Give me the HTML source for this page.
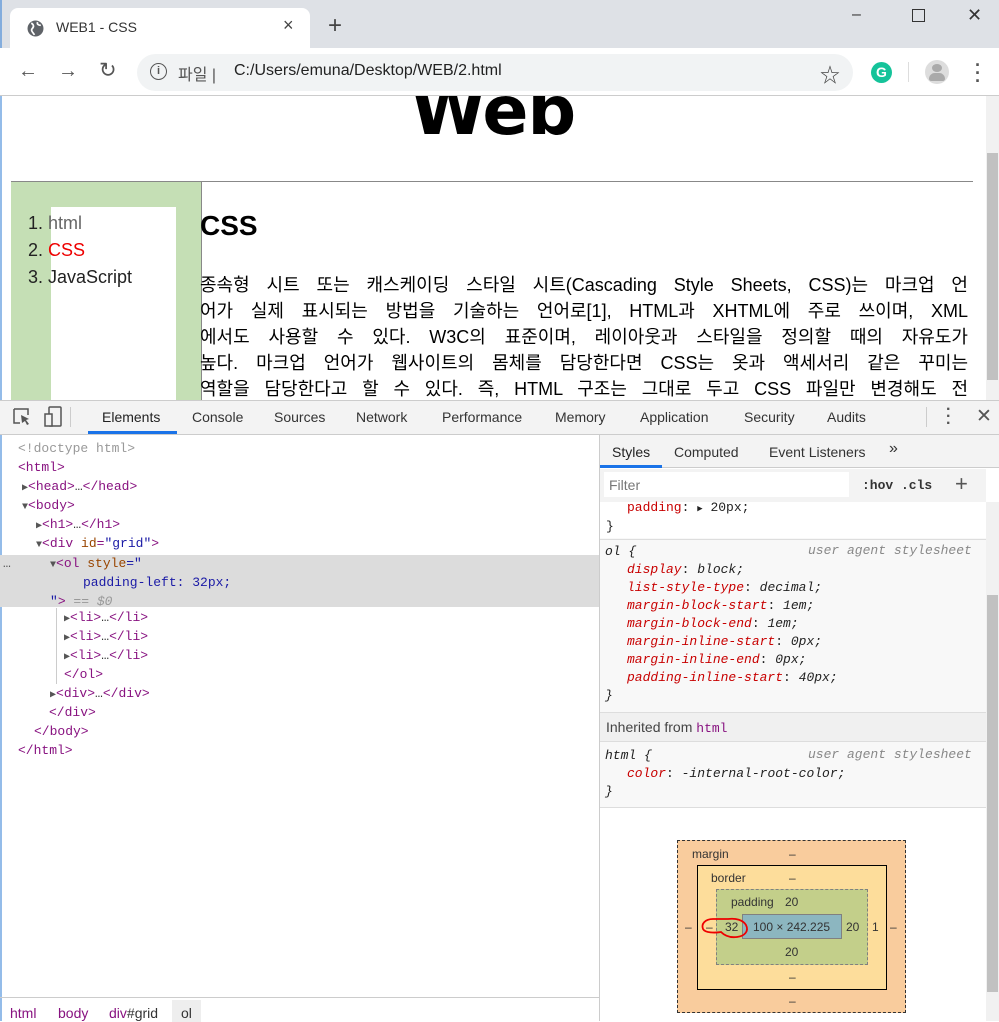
<!DOCTYPE html>
<html><head><meta charset="utf-8"><style>
*{box-sizing:border-box;margin:0;padding:0}
body{width:999px;height:1021px;overflow:hidden;position:relative;font-family:"Liberation Sans","Noto Sans CJK KR",sans-serif;background:#fff}
.a{position:absolute;white-space:nowrap}
.m{font-family:"Liberation Mono","DejaVu Sans Mono",monospace;font-size:13px}
.tg{color:#881280}.at{color:#994500}.av{color:#1a1aa6}.gr{color:#999}
.pr{color:#c80000;font-style:italic}.it{font-style:italic}
.tree div{height:19.1px;line-height:19.1px}
.tri{color:#555;font-size:10px}
.pl div{height:26px;line-height:26px;text-align:justify;text-align-last:justify;width:768px;white-space:normal}
</style></head><body>
<!-- tab strip -->
<div class="a" style="left:0;top:0;width:999px;height:48px;background:#dee1e6"></div>
<div class="a" style="left:0;top:0;width:2px;height:1021px;background:#2a7ad4;opacity:.5"></div>
<div class="a" style="left:10px;top:8px;width:300px;height:42px;background:#fff;border-radius:8px 8px 0 0"></div>
<svg class="a" style="left:27px;top:20px" width="17" height="17" viewBox="0 0 16 16"><circle cx="8" cy="8" r="7.5" fill="#5f6368"/><path d="M4 3c2 1 3 3 1 5s1 4 2 6M10 2c-1 2 1 3 3 3" stroke="#fff" stroke-width="1.6" fill="none"/></svg>
<div class="a" style="left:56px;top:19px;font-size:14px;color:#333">WEB1 - CSS</div>
<div class="a" style="left:283px;top:15px;font-size:18px;color:#444">×</div>
<div class="a" style="left:328px;top:12px;font-size:24px;color:#444">+</div>
<div class="a" style="left:852px;top:6px;font-size:16px;color:#333">–</div>
<div class="a" style="left:912px;top:9px;width:13px;height:13px;border:1.5px solid #333"></div>
<div class="a" style="left:967px;top:5px;font-size:18px;color:#333">✕</div>
<!-- toolbar -->
<div class="a" style="left:0;top:48px;width:999px;height:48px;background:#fff;border-bottom:1px solid #ccc"></div>
<div class="a" style="left:18px;top:60px;font-size:20px;color:#555">←</div>
<div class="a" style="left:58px;top:60px;font-size:20px;color:#555">→</div>
<div class="a" style="left:99px;top:58px;font-size:21px;color:#555">↻</div>
<div class="a" style="left:137px;top:54px;width:716px;height:37px;background:#f1f3f4;border-radius:19px"></div>
<div class="a" style="left:150px;top:63px;width:17px;height:17px;border:1.8px solid #555;border-radius:50%;font-size:11px;text-align:center;line-height:14px;color:#555;font-weight:bold">i</div>
<div class="a" style="left:178px;top:61px;font-size:16px;color:#555">파일 |</div>
<div class="a" style="left:234px;top:62px;font-size:16px;color:#222">C:/Users/emuna/Desktop/WEB/2.html</div>
<div class="a" style="left:820px;top:59px;font-size:20px;color:#444">☆</div>
<div class="a" style="left:871px;top:62px;width:21px;height:21px;border-radius:50%;background:#15c39a;color:#fff;font-size:14px;font-weight:bold;text-align:center;line-height:21px">G</div>
<div class="a" style="left:908px;top:62px;width:1px;height:20px;background:#ddd"></div>
<div class="a" style="left:925px;top:60px;width:24px;height:24px;border-radius:50%;background:#ddd"></div>
<div class="a" style="left:932px;top:64px;width:10px;height:8px;border-radius:50%;background:#aaa"></div>
<div class="a" style="left:929px;top:73px;width:16px;height:8px;border-radius:8px 8px 3px 3px;background:#aaa"></div>
<div class="a" style="left:975px;top:61px;font-size:18px;color:#555;line-height:8px;font-weight:bold">·<br>·<br>·</div>
<!-- page -->
<div class="a" style="left:0;top:96px;width:986px;height:304px;overflow:hidden">
 <div class="a" style="left:0;top:-24px;width:986px;text-align:center;font-size:68px;font-weight:bold;font-family:'DejaVu Sans',sans-serif;letter-spacing:-1px">Web</div>
 <div class="a" style="left:11px;top:85px;width:962px;height:1px;background:#888"></div>
 <div class="a" style="left:11px;top:86px;width:190px;height:220px;background:#c5dfb5"></div>
 <div class="a" style="left:201px;top:86px;width:1px;height:220px;background:#888"></div>
 <div class="a" style="left:51px;top:111px;width:125px;height:200px;background:#fff"></div>
 <div class="a" style="left:28px;top:114px;font-size:18px;line-height:27px;color:#222">1. <span style="color:#666">html</span><br>2. <span style="color:#e00">CSS</span><br>3. JavaScript</div>
 <div class="a" style="left:200px;top:114px;font-size:28px;font-weight:bold">CSS</div>
 <div class="a pl" style="left:200px;top:176px;font-size:18px;">
  <div>종속형 시트 또는 캐스케이딩 스타일 시트(Cascading Style Sheets, CSS)는 마크업 언</div>
  <div>어가 실제 표시되는 방법을 기술하는 언어로[1], HTML과 XHTML에 주로 쓰이며, XML</div>
  <div>에서도 사용할 수 있다. W3C의 표준이며, 레이아웃과 스타일을 정의할 때의 자유도가</div>
  <div>높다. 마크업 언어가 웹사이트의 몸체를 담당한다면 CSS는 옷과 액세서리 같은 꾸미는</div>
  <div>역할을 담당한다고 할 수 있다. 즉, HTML 구조는 그대로 두고 CSS 파일만 변경해도 전</div>
 </div>
</div>
<div class="a" style="left:986px;top:96px;width:13px;height:304px;background:#f1f1f1"></div>
<div class="a" style="left:987px;top:153px;width:11px;height:227px;background:#c1c1c1"></div>
<!-- devtools tabs -->
<div class="a" style="left:0;top:400px;width:999px;height:35px;background:#f3f3f3;border-top:1px solid #ccc;border-bottom:1px solid #ccc"></div>
<svg class="a" style="left:12px;top:407px" width="20" height="20"><path d="M2 2h14v6M2 2v14h6" stroke="#555" fill="none" stroke-width="1.5"/><path d="M9 8l8 4-3 1 3 4-2 1-2-4-3 2z" fill="#555"/></svg>
<svg class="a" style="left:44px;top:406px" width="20" height="22"><rect x="5" y="1" width="12" height="19" rx="1" stroke="#555" fill="none" stroke-width="1.5"/><rect x="1" y="8" width="7" height="12" fill="#f3f3f3" stroke="#555" stroke-width="1.5"/></svg>
<div class="a" style="left:70px;top:407px;width:1px;height:20px;background:#ccc"></div>
<div class="a" style="left:0;top:409px;font-size:14px;color:#333">
<span class="a" style="left:102px;color:#222">Elements</span><span class="a" style="left:192px">Console</span><span class="a" style="left:274px">Sources</span><span class="a" style="left:356px">Network</span><span class="a" style="left:442px">Performance</span><span class="a" style="left:555px">Memory</span><span class="a" style="left:640px">Application</span><span class="a" style="left:744px">Security</span><span class="a" style="left:827px">Audits</span></div>
<div class="a" style="left:88px;top:431px;width:89px;height:3px;background:#1a73e8"></div>
<div class="a" style="left:926px;top:407px;width:1px;height:20px;background:#ccc"></div>
<div class="a" style="left:946px;top:406px;font-size:16px;font-weight:bold;color:#555;line-height:7px">·<br>·<br>·</div>
<div class="a" style="left:976px;top:405px;font-size:19px;color:#555">✕</div>
<!-- elements tree -->
<div class="a" style="left:0;top:555px;width:599px;height:52px;background:#dcdcdc"></div>
<div class="a m tree" style="left:0;top:439px;color:#881280">
<div style="padding-left:18px" class="gr">&lt;!doctype html&gt;</div>
<div style="padding-left:18px">&lt;html&gt;</div>
<div style="padding-left:22px"><span class="tri">▶</span>&lt;head&gt;<span style="color:#333">…</span>&lt;/head&gt;</div>
<div style="padding-left:22px"><span class="tri">▼</span>&lt;body&gt;</div>
<div style="padding-left:36px"><span class="tri">▶</span>&lt;h1&gt;<span style="color:#333">…</span>&lt;/h1&gt;</div>
<div style="padding-left:36px"><span class="tri">▼</span>&lt;div <span class="at">id</span>=<span class="av">"grid"</span>&gt;</div>
<div style="padding-left:50px;position:relative"><span style="position:absolute;left:3px;color:#555">…</span><span class="tri">▼</span>&lt;ol <span class="at">style</span><span class="av">="</span></div>
<div style="padding-left:83px" class="av">padding-left: 32px;</div>
<div style="padding-left:50px;height:16px"><span class="av">"</span>&gt; <span class="gr it">== $0</span></div>
<div style="padding-left:64px"><span class="tri">▶</span>&lt;li&gt;<span style="color:#333">…</span>&lt;/li&gt;</div>
<div style="padding-left:64px"><span class="tri">▶</span>&lt;li&gt;<span style="color:#333">…</span>&lt;/li&gt;</div>
<div style="padding-left:64px"><span class="tri">▶</span>&lt;li&gt;<span style="color:#333">…</span>&lt;/li&gt;</div>
<div style="padding-left:64px">&lt;/ol&gt;</div>
<div style="padding-left:50px"><span class="tri">▶</span>&lt;div&gt;<span style="color:#333">…</span>&lt;/div&gt;</div>
<div style="padding-left:49px">&lt;/div&gt;</div>
<div style="padding-left:34px">&lt;/body&gt;</div>
<div style="padding-left:18px">&lt;/html&gt;</div>
</div>
<div class="a" style="left:56px;top:608px;width:1px;height:76px;background:#ccc"></div>
<!-- breadcrumb -->
<div class="a" style="left:0;top:997px;width:599px;height:24px;border-top:1px solid #ccc;font-size:14px;color:#881280">
<span class="a" style="left:10px;top:7px">html</span><span class="a" style="left:58px;top:7px">body</span><span class="a" style="left:109px;top:7px">div<span style="color:#333">#grid</span></span>
<span class="a" style="left:172px;top:2px;width:29px;height:22px;background:#eee;padding:5px 9px;color:#333">ol</span></div>
<!-- right panel -->
<div class="a" style="left:599px;top:435px;width:1px;height:586px;background:#ccc"></div>
<div class="a" style="left:600px;top:435px;width:399px;height:33px;background:#f3f3f3;border-bottom:1px solid #ccc"></div>
<div class="a" style="left:612px;top:444px;font-size:14px;color:#222">Styles</div>
<div class="a" style="left:674px;top:444px;font-size:14px;color:#333">Computed</div>
<div class="a" style="left:769px;top:444px;font-size:14px;color:#333">Event Listeners</div>
<div class="a" style="left:889px;top:440px;font-size:16px;color:#333">»</div>
<div class="a" style="left:600px;top:465px;width:62px;height:3px;background:#1a73e8"></div>
<div class="a" style="left:600px;top:469px;width:386px;height:33px;background:#f3f3f3"></div>
<div class="a" style="left:604px;top:472px;width:245px;height:25px;background:#fff;font-size:14px;color:#777;padding:5px 5px">Filter</div>
<div class="a m" style="left:862px;top:478px;font-weight:bold;color:#333">:hov .cls</div>
<div class="a" style="left:955px;top:471px;font-size:22px;color:#555">+</div>
<div class="a" style="left:600px;top:502px;width:386px;height:305px;background:#f8f8f8"></div>
<div class="a" style="left:600px;top:502px;width:386px;height:36px;background:#fff"></div>
<div class="a m" style="left:606px;top:499px;line-height:18px;color:#222">
<div style="padding-left:21px"><span style="color:#c80000">padding</span>: <span style="font-size:9px">▶</span> 20px;</div><div>}</div></div>
<div class="a" style="left:600px;top:539px;width:386px;height:1px;background:#ddd"></div>
<div class="a m" style="left:605px;top:543px;line-height:18px;color:#222">
<div class="it">ol {</div>
<div style="padding-left:22px"><span class="pr">display</span>: <span class="it">block;</span></div>
<div style="padding-left:22px"><span class="pr">list-style-type</span>: <span class="it">decimal;</span></div>
<div style="padding-left:22px"><span class="pr">margin-block-start</span>: <span class="it">1em;</span></div>
<div style="padding-left:22px"><span class="pr">margin-block-end</span>: <span class="it">1em;</span></div>
<div style="padding-left:22px"><span class="pr">margin-inline-start</span>: <span class="it">0px;</span></div>
<div style="padding-left:22px"><span class="pr">margin-inline-end</span>: <span class="it">0px;</span></div>
<div style="padding-left:22px"><span class="pr">padding-inline-start</span>: <span class="it">40px;</span></div>
<div class="it">}</div></div>
<div class="a m it" style="left:808px;top:543px;color:#888">user agent stylesheet</div>
<div class="a" style="left:600px;top:712px;width:386px;height:30px;background:#f0f0f0;border-top:1px solid #ddd;border-bottom:1px solid #ddd"></div>
<div class="a" style="left:606px;top:719px;font-size:14px;color:#444">Inherited from <span class="m" style="color:#881280">html</span></div>
<div class="a m" style="left:605px;top:747px;line-height:18px;color:#222">
<div class="it">html {</div>
<div style="padding-left:22px"><span class="pr">color</span>: <span class="it">-internal-root-color;</span></div>
<div class="it">}</div></div>
<div class="a m it" style="left:808px;top:747px;color:#888">user agent stylesheet</div>
<div class="a" style="left:600px;top:807px;width:386px;height:1px;background:#ddd"></div>
<div class="a" style="left:986px;top:502px;width:13px;height:519px;background:#f1f1f1"></div>
<div class="a" style="left:987px;top:595px;width:11px;height:397px;background:#c1c1c1"></div>
<!-- box model -->
<div class="a" style="left:677px;top:840px;width:229px;height:173px;background:#f9cc9d;border:1px dashed #333"></div>
<div class="a" style="left:697px;top:865px;width:190px;height:125px;background:#fddd9b;border:1px solid #000"></div>
<div class="a" style="left:716px;top:889px;width:152px;height:76px;background:#c3cf8a;border:1px dashed #808080"></div>
<div class="a" style="left:742px;top:914px;width:100px;height:25px;background:#8cb6c0;border:1px solid #808080"></div>
<div style="font-size:12px;color:#333">
<span class="a" style="left:692px;top:847px">margin</span><span class="a" style="left:789px;top:847px">–</span>
<span class="a" style="left:711px;top:871px">border</span><span class="a" style="left:789px;top:871px">–</span>
<span class="a" style="left:731px;top:895px">padding</span><span class="a" style="left:785px;top:895px">20</span>
<span class="a" style="left:685px;top:920px">–</span><span class="a" style="left:706px;top:920px">–</span><span class="a" style="left:725px;top:920px">32</span>
<span class="a" style="left:753px;top:920px">100 × 242.225</span><span class="a" style="left:846px;top:920px">20</span><span class="a" style="left:872px;top:920px">1</span><span class="a" style="left:890px;top:920px">–</span>
<span class="a" style="left:785px;top:945px">20</span><span class="a" style="left:789px;top:970px">–</span><span class="a" style="left:789px;top:994px">–</span></div>
<svg class="a" style="left:700px;top:915px" width="52" height="30"><path d="M13 4c-8 0-12 5-10 10 2 4 12 4 18 3 3 3 8 6 16 5 8-1 12-6 9-12-3-5-10-7-18-6-6 0-11 0-15 0" stroke="#e00" stroke-width="1.8" fill="none"/></svg>
</body></html>
